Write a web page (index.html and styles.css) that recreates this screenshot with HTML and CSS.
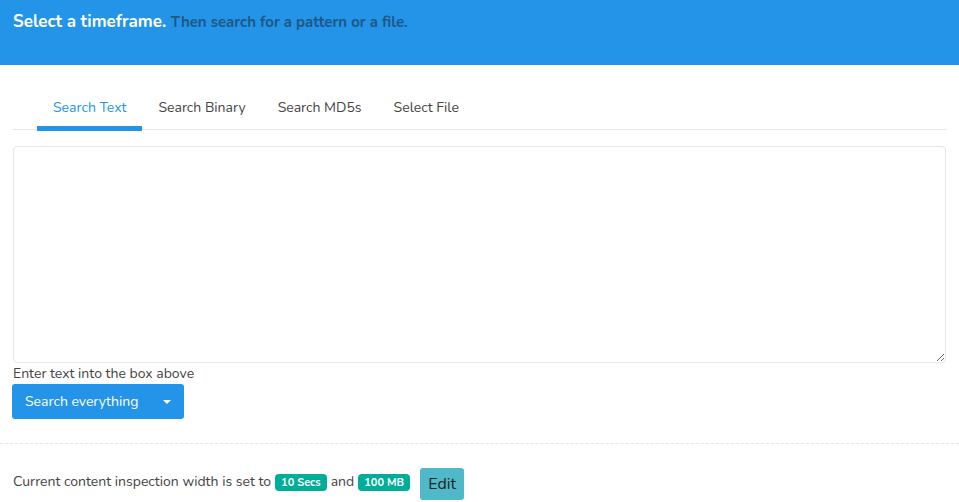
FILE: index.html
```html
<!DOCTYPE html>
<html>
<head>
<meta charset="utf-8">
<link rel="stylesheet" href="styles.css">
</head>
<body>
<header class="hero">
  <h1 class="hero-title">Select a timeframe. <small class="hero-sub">Then search for a pattern or a file.</small></h1>
</header>
<main class="content">
  <nav class="tabs">
    <a class="tab active">Search Text</a>
    <a class="tab">Search Binary</a>
    <a class="tab">Search MD5s</a>
    <a class="tab">Select File</a>
  </nav>
  <textarea class="box"></textarea>
  <div class="help">Enter text into the box above</div>
  <button class="btn-search"><span>Search everything</span><span class="caret"></span></button>
</main>
<hr class="sep">
<footer class="foot">
  <span class="foot-text">Current content inspection width is set to</span>
  <span class="badge">10 Secs</span>
  <span class="foot-text">and</span>
  <span class="badge">100 MB</span>
  <button class="btn-edit">Edit</button>
</footer>
</body>
</html>
```
FILE: styles.css
```css
html, body { margin: 0; padding: 0; }
body {
  font-family: "Nunito", Lato, "Noto Sans", sans-serif;
  font-size: 14px;
  color: #444;
  background: #fff;
  width: 959px;
  height: 502px;
  overflow: hidden;
}
.hero {
  background: #2494e9;
  height: 65px;
  box-sizing: border-box;
  padding: 12px 13px 0;
}
.hero-title {
  margin: 0;
  font-size: 17px;
  font-weight: 700;
  color: #fff;
  line-height: 20px;
}
.hero-sub {
  font-size: 15px;
  color: #1f5785;
  font-weight: 700;
}
.content {
  padding: 0 13px;
}
.tabs {
  display: flex;
  margin-top: 24px;
  padding-left: 24px;
  border-bottom: 1px solid #e6e6e6;
  height: 41px;
  box-sizing: border-box;
}
.tab {
  padding: 9px 16px 0;
  height: 40px;
  box-sizing: border-box;
  color: #444;
  line-height: 20px;
  cursor: pointer;
}
.tab.active {
  color: #2494e9;
  border-bottom: 5px solid #2494e9;
  height: 42px;
}
.box {
  display: block;
  width: 100%;
  box-sizing: border-box;
  height: 217px;
  margin-top: 16px;
  border: 1px solid #e6e6e0;
  border-radius: 4px;
  resize: vertical;
  font: inherit;
}
.help {
  margin-top: 2px;
  line-height: 18px;
  color: #444;
}
.btn-search {
  display: flex;
  align-items: center;
  margin-left: -1px;
  margin-top: 1px;
  width: 172px;
  height: 35px;
  background: #2494e9;
  color: #fff;
  border: none;
  border-radius: 3px;
  font: inherit;
  font-size: 14px;
  padding: 0 13px;
  justify-content: space-between;
}
.caret {
  width: 0; height: 0;
  border-left: 4px solid transparent;
  border-right: 4px solid transparent;
  border-top: 4px solid #fff;
}
.sep {
  margin: 24px 0 0;
  border: 0;
  border-top: 1px dashed #e6e6e6;
}
.foot {
  display: flex;
  align-items: center;
  padding: 24px 13px 0;
  gap: 4px;
}
.foot-text {
  margin-bottom: 6px;
}
.badge {
  background: #00ad98;
  color: #fff;
  font-size: 11px;
  font-weight: 700;
  border-radius: 4px;
  padding: 0 6px;
  height: 17px;
  line-height: 17px;
  margin-bottom: 4px;
}
.btn-edit {
  margin-left: 6px;
  background: #4fb9c9;
  border: none;
  border-radius: 3px;
  height: 32px;
  padding: 0 8px;
  font: inherit;
  font-size: 16px;
  color: #222;
}
```
